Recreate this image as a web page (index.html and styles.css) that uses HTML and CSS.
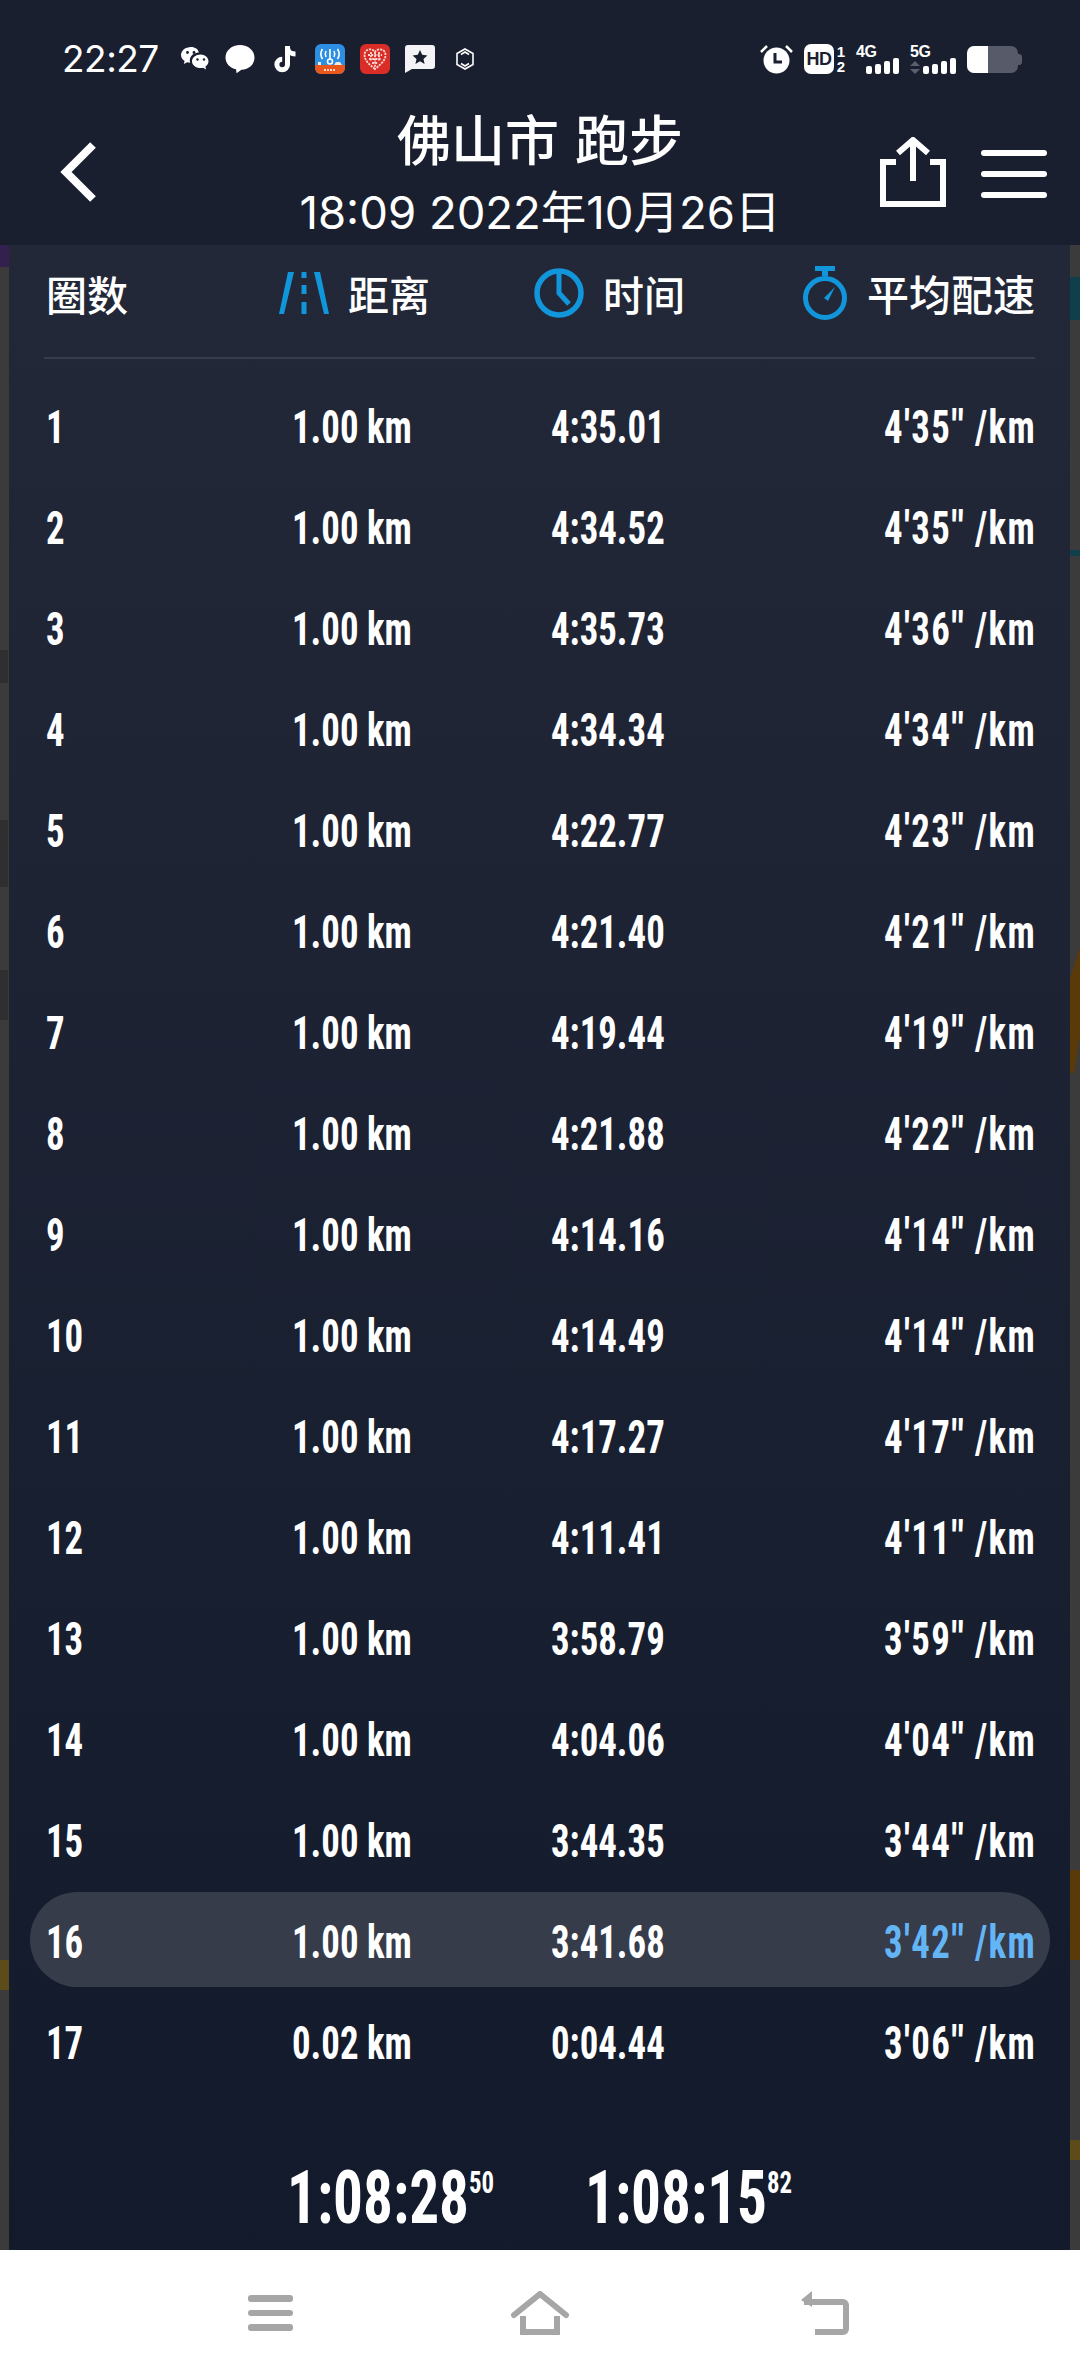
FILE: index.html
```html
<!DOCTYPE html>
<html lang="zh-CN">
<head>
<meta charset="utf-8">
<title>佛山市 跑步</title>
<link rel="stylesheet" href="styles.css">
</head>
<body>
<div class="screen">
  <div class="top">
    <div class="status">
      <span class="clock">22:27</span>
      <div class="notifs">
        <span class="slot"><svg width="30" height="26" viewBox="0 0 30 26"><path fill="#fff" d="M11 1C5.500 1 1 4.600 1 9c0 2.500 1.400 4.600 3.600 6l-.8 3 3.400-1.800c1 .3 2 .5 3 .5-.3-.9-.4-1.600-.4-2.400 0-4.300 4.100-7.600 9-7.700C18.400 3.200 15 1 11 1z"/><path fill="#fff" d="M20.500 8.500c-4.700 0-8.500 3-8.500 6.800s3.800 6.800 8.500 6.800c.9 0 1.800-.1 2.600-.4l3 1.700-.7-2.800c1.900-1.200 3.100-3.200 3.100-5.300 0-3.800-3.500-6.800-8-6.800z"/><circle cx="7.500" cy="6.500" r="1.400" fill="#1a1f30"/><circle cx="14" cy="6.500" r="1.400" fill="#1a1f30"/><circle cx="17.500" cy="13.500" r="1.200" fill="#1a1f30"/><circle cx="24" cy="13.500" r="1.200" fill="#1a1f30"/></svg></span>
        <span class="slot"><svg width="30" height="30" viewBox="0 0 30 30"><path fill="#fff" d="M15 1C6.800 1 .5 6.500.5 13.500c0 6 4.500 10.600 10.500 11.800l.6 4 4.800-3.600C24 25.500 29.500 20.500 29.500 13.500 29.500 6.500 23.200 1 15 1z"/></svg></span>
        <span class="slot"><svg width="24" height="28" viewBox="0 0 24 28"><path fill="none" stroke="#fff" stroke-width="5" d="M14.500 1v18.500a5.300 5.300 0 1 1-5.300-5.300"/><path fill="none" stroke="#fff" stroke-width="5" d="M14.500 3c.5 3.500 3.500 6 8 6"/></svg></span>
        <span class="slot"><svg width="30" height="30" viewBox="0 0 30 30"><rect width="30" height="30" rx="6" fill="#2d8fe3"/><path fill="#e8571c" d="M0 21h30v3a6 6 0 0 1-6 6H6a6 6 0 0 1-6-6z"/><g fill="none" stroke="#fff" stroke-width="1.600"><circle cx="15" cy="17.500" r="2.500"/><path d="M15 15V5M11 7c-1 2-1 4 0 6M19 7c1 2 1 4 0 6M7.500 5c-2 3-2 7 0 10M22.500 5c2 3 2 7 0 10"/></g><path fill="#f3e9d8" d="M19 21l2-3h4l2 3zM3 21v-3h3v3z"/><path stroke="#fff" stroke-width="1.400" stroke-dasharray="2 1" d="M9 26h12"/></svg></span>
        <span class="slot"><svg width="30" height="30" viewBox="0 0 30 30"><rect width="30" height="30" rx="6" fill="#db2d27"/><path fill="none" stroke="#fbd9d4" stroke-width="1.800" stroke-dasharray="2.200 1" d="M15 25C9 20 4.500 16.500 4.500 11c0-6 7.500-7.500 10.500-3 3-4.500 10.500-3 10.500 3 0 5.500-4.500 9-10.500 14z"/><path fill="none" stroke="#fbd9d4" stroke-width="1.800" stroke-dasharray="2 1.200" d="M8 11h14M9 15h12M12 19h6M15 8v15M11 8v9M19 8v9"/></svg></span>
        <span class="slot"><svg width="30" height="28" viewBox="0 0 30 28"><path fill="#f4f4f6" d="M3 0h24a3 3 0 0 1 3 3v18a3 3 0 0 1-3 3H7l-7 4V3a3 3 0 0 1 3-3z"/><path fill="#1a1f30" d="M15 5l2.200 4.800 5.200.6-3.900 3.500 1.100 5.100-4.600-2.700-4.600 2.700 1.100-5.100-3.900-3.500 5.200-.6z"/></svg></span>
        <span class="slot"><svg width="18" height="22" viewBox="0 0 18 22"><path fill="none" stroke="#fff" stroke-width="1.600" d="M9 1l8 4.500v11L9 21l-8-4.500v-11zM5 6.500L9 4l4 2.500M13 15.500L9 18l-4-2.500"/></svg></span>
      </div>
      <div class="sysicons">
        <svg width="33" height="30" viewBox="0 0 33 30"><circle cx="16.500" cy="16.500" r="13" fill="#fff"/><path fill="none" stroke="#1a1f30" stroke-width="3" d="M15 9v9h7"/><path fill="none" stroke="#fff" stroke-width="2.500" d="M1 8l6-6M32 8l-6-6"/></svg>
        <div class="hd"><span class="hd-box">HD</span><span class="hd-sims"><span>1</span><span>2</span></span></div>
        <div class="net"><span class="net-label">4G</span><span class="bars"><i class="b1"></i><i class="b2"></i><i class="b3"></i><i class="b4"></i></span></div>
        <div class="net net-5g"><span class="net-label">5G</span><svg class="updown" width="10" height="13" viewBox="0 0 10 13"><path fill="#5b5f6d" d="M5 0l5 5H0zM5 13L0 8h10z"/></svg><span class="bars"><i class="b1"></i><i class="b2"></i><i class="b3"></i><i class="b4"></i></span></div>
        <div class="battery"><span class="battery-level"></span><span class="battery-nub"></span></div>
      </div>
    </div>
    <div class="appbar">
      <svg class="back" width="36" height="60" viewBox="0 0 36 60"><path fill="none" stroke="#fff" stroke-width="8" d="M33 3L6 30l27 27"/></svg>
      <div class="titles">
        <div class="title">佛山市 跑步</div>
        <div class="subtitle">18:09 2022年10月26日</div>
      </div>
      <div class="actions">
        <svg width="66" height="70" viewBox="0 0 66 70"><path fill="none" stroke="#fff" stroke-width="6" d="M16 25H3v42h60V25H50"/><path fill="none" stroke="#fff" stroke-width="6" d="M33 44V4M18 16L33 3l15 13"/></svg>
        <div class="burger"><i></i><i></i><i></i></div>
      </div>
    </div>
  </div>

  <div class="main">
    <div class="map-patch teal"></div>
    <div class="map-patch teal-thin"></div>
    <div class="map-patch orange"></div>
    <div class="map-patch orange-low"></div>
    <div class="map-patch yellow"></div>
    <div class="map-patch yellow-right"></div>
    <div class="map-patch purple"></div>
    <div class="map-patch label-a"></div>
    <div class="map-patch label-b"></div>
    <div class="map-patch label-c"></div>
    <div class="panel">
      <div class="thead">
        <span class="th">圈数</span>
        <span class="th"><svg width="50" height="44" viewBox="0 0 50 44"><path fill="#1296db" d="M9 1h6L5 43H0zM35 1h6l9 42h-5z"/><path fill="#1296db" d="M22.500 1h5v6h-5zM22.500 14h5v9h-5zM22.500 31h5v12h-5z"/></svg>距离</span>
        <span class="th"><svg width="50" height="50" viewBox="0 0 50 50"><circle cx="25" cy="25" r="22" fill="none" stroke="#1296db" stroke-width="5.500"/><path fill="none" stroke="#1296db" stroke-width="5" d="M25 2v23l10 11"/></svg>时间</span>
        <span class="th"><svg width="46" height="54" viewBox="0 0 46 54"><path fill="#1296db" d="M13 0h20v5h-7v5h-6V5h-7z"/><circle cx="23" cy="32" r="19.500" fill="none" stroke="#1296db" stroke-width="5"/><path fill="#1296db" d="M33 21l-7 14-4-3z"/></svg>平均配速</span>
      </div>
      <div class="list">
        <div class="row"><span>1</span><span>1.00 km</span><span>4:35.01</span><span class="pace">4'35'' /km</span></div>
        <div class="row"><span>2</span><span>1.00 km</span><span>4:34.52</span><span class="pace">4'35'' /km</span></div>
        <div class="row"><span>3</span><span>1.00 km</span><span>4:35.73</span><span class="pace">4'36'' /km</span></div>
        <div class="row"><span>4</span><span>1.00 km</span><span>4:34.34</span><span class="pace">4'34'' /km</span></div>
        <div class="row"><span>5</span><span>1.00 km</span><span>4:22.77</span><span class="pace">4'23'' /km</span></div>
        <div class="row"><span>6</span><span>1.00 km</span><span>4:21.40</span><span class="pace">4'21'' /km</span></div>
        <div class="row"><span>7</span><span>1.00 km</span><span>4:19.44</span><span class="pace">4'19'' /km</span></div>
        <div class="row"><span>8</span><span>1.00 km</span><span>4:21.88</span><span class="pace">4'22'' /km</span></div>
        <div class="row"><span>9</span><span>1.00 km</span><span>4:14.16</span><span class="pace">4'14'' /km</span></div>
        <div class="row"><span>10</span><span>1.00 km</span><span>4:14.49</span><span class="pace">4'14'' /km</span></div>
        <div class="row"><span>11</span><span>1.00 km</span><span>4:17.27</span><span class="pace">4'17'' /km</span></div>
        <div class="row"><span>12</span><span>1.00 km</span><span>4:11.41</span><span class="pace">4'11'' /km</span></div>
        <div class="row"><span>13</span><span>1.00 km</span><span>3:58.79</span><span class="pace">3'59'' /km</span></div>
        <div class="row"><span>14</span><span>1.00 km</span><span>4:04.06</span><span class="pace">4'04'' /km</span></div>
        <div class="row"><span>15</span><span>1.00 km</span><span>3:44.35</span><span class="pace">3'44'' /km</span></div>
        <div class="row row-best"><span>16</span><span>1.00 km</span><span>3:41.68</span><span class="pace">3'42'' /km</span></div>
        <div class="row"><span>17</span><span>0.02 km</span><span>0:04.44</span><span class="pace">3'06'' /km</span></div>
      </div>
      <div class="totals">
        <span class="total">1:08:28<sup>50</sup></span>
        <span class="total">1:08:15<sup>82</sup></span>
      </div>
    </div>
  </div>

  <div class="nav">
    <div class="nav-menu"><i></i><i></i><i></i></div>
    <svg class="nav-home" width="58" height="44" viewBox="0 0 58 44"><path fill="none" stroke="#a6a6a6" stroke-width="6" stroke-linecap="round" d="M3 24L29 3l26 21"/><path fill="none" stroke="#a6a6a6" stroke-width="6" d="M12 25v16h34V25"/></svg>
    <svg class="nav-back" width="48" height="44" viewBox="0 0 48 44"><path fill="none" stroke="#a6a6a6" stroke-width="6" stroke-linejoin="round" d="M3 11h39a3 3 0 0 1 3 3v24a3 3 0 0 1-3 3H14"/><path fill="#a6a6a6" d="M0 9l11-9v16z"/></svg>
  </div>
</div>
</body>
</html>
```
FILE: styles.css
```css
* { box-sizing: border-box; }
html, body { margin: 0; padding: 0; }
body {
  width: 1080px;
  height: 2376px;
  overflow: hidden;
  background: #1a1f30;
  color: #fff;
  font-family: "Noto Sans CJK SC", sans-serif;
}
.screen { display: flex; flex-direction: column; height: 2376px; }

/* top area */
.top { background: #1a1f30; height: 245px; flex: none; }
.status { display: flex; align-items: center; height: 90px; padding: 28px 58px 0 62px; }
.clock { font: 400 37px/44px Inter, "Liberation Sans", sans-serif; width: 110px; letter-spacing: -0.5px; }
.notifs { display: flex; align-items: center; }
.slot { width: 45px; display: flex; justify-content: center; align-items: center; }
.sysicons { margin-left: auto; display: flex; align-items: center; gap: 11px; }
.hd { display: flex; width: 41px; height: 30px; }
.hd-box { width: 30px; height: 30px; border-radius: 7px; background: #fff; color: #1a1f30; font: 700 18px/30px "Liberation Sans", sans-serif; text-align: center; letter-spacing: -0.5px; }
.hd-sims { display: flex; flex-direction: column; width: 11px; font: 700 15px/15px "Liberation Sans", sans-serif; text-align: right; }
.net { position: relative; width: 43px; height: 30px; }
.net-5g { width: 46px; }
.net-label { position: absolute; left: 0; top: 0; font: 700 16px/16px "Liberation Sans", sans-serif; letter-spacing: -0.5px; }
.updown { position: absolute; left: 0; bottom: 0; }
.bars { position: absolute; right: 0; bottom: 0; display: flex; align-items: flex-end; gap: 3px; }
.bars i { display: block; width: 6px; background: #fff; border-radius: 2px; }
.b1 { height: 8px; }
.b2 { height: 10px; }
.b3 { height: 13px; }
.b4 { height: 16px; }
.battery { position: relative; width: 51px; height: 27px; margin-right: 4px; border-radius: 7px; background: #575a68; }
.battery-level { display: block; width: 21px; height: 27px; background: #fff; border-radius: 7px 0 0 7px; }
.battery-nub { position: absolute; right: -4px; top: 8px; width: 4px; height: 11px; background: #575a68; border-radius: 0 3px 3px 0; }

.appbar { display: grid; grid-template-columns: 1fr auto 1fr; height: 155px; padding: 0 33px; }
.back { margin: 52px 0 0 27px; }
.titles { text-align: center; padding-top: 18px; }
.title { font-size: 54px; line-height: 60px; font-weight: 500; white-space: pre; word-spacing: 4px; }
.subtitle { font: 400 45.500px/62px Inter, "Noto Sans CJK SC", sans-serif; white-space: pre; margin-top: 14px; }
.actions { display: flex; justify-content: flex-end; align-items: flex-start; gap: 35px; padding-top: 47px; }
.burger { display: flex; flex-direction: column; gap: 15px; padding-top: 13px; }
.burger i { display: block; width: 66px; height: 6px; border-radius: 3px; background: #fff; }

/* map peeking out behind the panel */
.main { position: relative; flex: 1; background: #3b3b3b; padding: 0 10px 0 9px; overflow: hidden; }
.map-patch { position: absolute; }
.teal { right: 0; top: 32px; width: 10px; height: 43px; background: #0f3f4a; }
.teal-thin { right: 0; top: 305px; width: 10px; height: 6px; background: #0f3f4a; }
.orange { right: 0; top: 702px; width: 10px; height: 126px; background: #5a3a08; clip-path: polygon(100% 0, 100% 70%, 40% 100%, 0 100%, 0 25%); }
.orange-low { right: 0; top: 1625px; width: 10px; height: 90px; background: #5a3a08; }
.yellow { left: 0; top: 1715px; width: 9px; height: 30px; background: #5d4c1a; }
.yellow-right { right: 0; top: 1895px; width: 10px; height: 20px; background: #5d4c1a; }
.purple { left: 0; top: 0; width: 9px; height: 22px; background: #33204f; }
.label-a { left: 0; top: 405px; width: 8px; height: 33px; background: #2f2f31; }
.label-b { left: 0; top: 575px; width: 8px; height: 67px; background: #2f2f31; }
.label-c { left: 0; top: 725px; width: 8px; height: 50px; background: #2f2f31; }

.panel {
  position: relative;
  height: 100%;
  background: linear-gradient(#232838, #121a2b);
}

/* table head */
.thead {
  display: grid;
  grid-template-columns: 233px 255px 1fr auto;
  align-items: center;
  margin: 0 35px 0 35px;
  height: 114px;
  padding: 0 0 17px 2px;
  border-bottom: 2px solid #383d4c;
  font-size: 41px;
  font-weight: 500;
}
.th { display: flex; align-items: center; gap: 19px; }
.th:last-child { font-size: 42px; }

/* laps: condensed numerals, narrowed further to the DIN-like widths */
.list { display: flex; flex-direction: column; gap: 6px; padding-top: 18px; }
.row {
  display: grid;
  grid-template-columns: 246px 259px 1fr auto;
  align-items: center;
  height: 95px;
  margin: 0 20px 0 21px;
  padding: 4px 14px 0 16px;
  border-radius: 48px;
  font-family: Roboto, sans-serif;
  font-stretch: 75%;
  font-size: 46px;
  font-weight: 700;
  line-height: 50px;
}
.row span { transform: scaleX(.8); transform-origin: left center; white-space: pre; }
.row .pace { transform-origin: right center; letter-spacing: 1.700px; }
.row-best { background: #373c4a; }
.row-best .pace { color: #64b5f6; }

.totals { display: flex; padding: 70px 0 0 278px; }
.total {
  width: 298px;
  font-family: Roboto, sans-serif;
  font-stretch: 75%;
  font-size: 74px;
  font-weight: 700;
  line-height: 80px;
  transform: scaleX(.8);
  transform-origin: left center;
  white-space: nowrap;
}
.total sup { font-size: 31px; line-height: 0; vertical-align: 30px; }

/* system nav */
.nav { display: flex; align-items: center; height: 126px; flex: none; background: #fff; padding-left: 248px; }
.nav-home { margin-left: 218px; }
.nav-back { margin-left: 232px; }
.nav-menu { display: flex; flex-direction: column; gap: 8px; }
.nav-menu i { display: block; width: 45px; height: 6.500px; border-radius: 3px; background: #a6a6a6; }
```
